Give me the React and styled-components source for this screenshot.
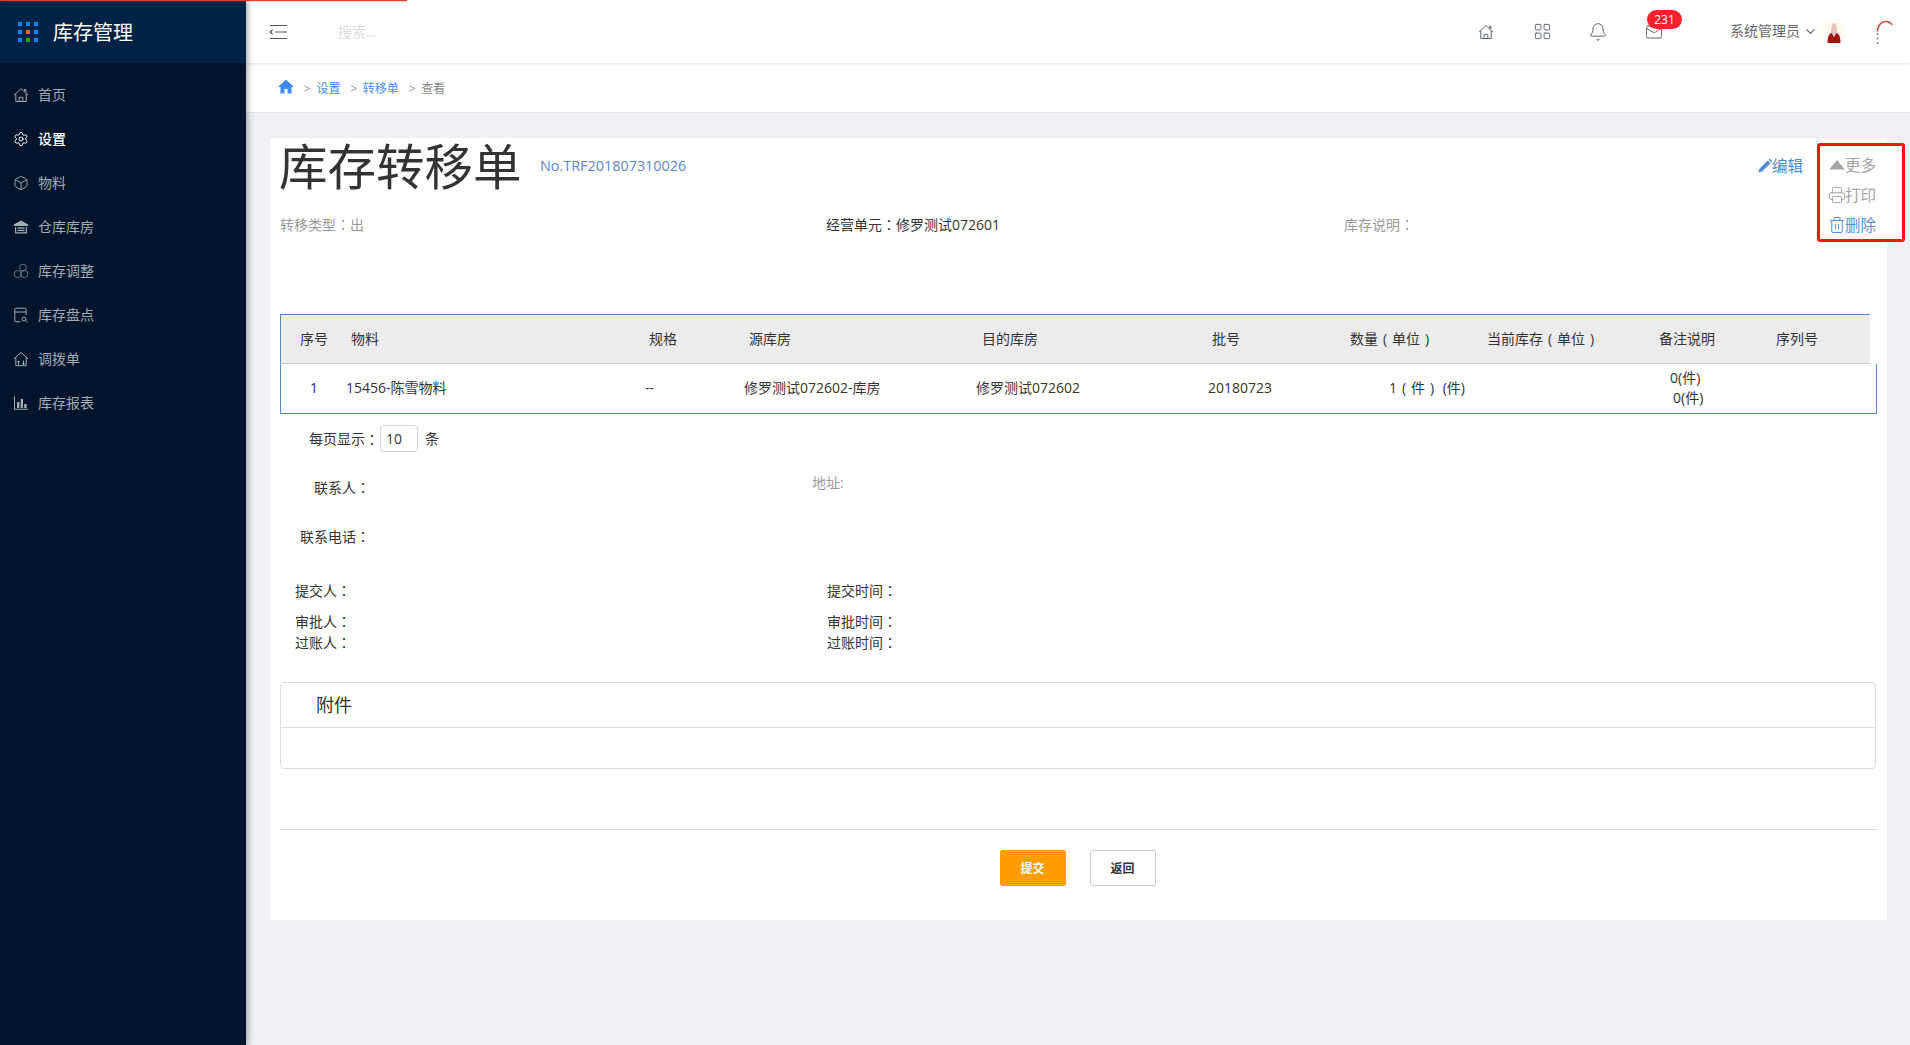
import React from "react";
import styled, { createGlobalStyle } from "styled-components";
import { Bell, Box, ChevronDown, LayoutGrid, Mail, Printer, Settings, Trash2 } from "lucide-react";

const GlobalStyle = createGlobalStyle`
  html, body {
    margin: 0;
    padding: 0;
    height: 100%;
    background: #eff1f5;
  }
  body {
    font-family: "Open Sans", "Noto Sans CJK SC", sans-serif;
    font-size: 14px;
    line-height: 20px;
    color: #333;
  }
  * {
    box-sizing: border-box;
  }
`;

const Shell = styled.div`
  position: relative;
  display: flex;
  height: 100vh;
  overflow: hidden;
`;

const LoadBar = styled.div`
  position: absolute;
  top: 0;
  left: 0;
  z-index: 5;
  width: 407px;
  height: 1px;
  background: #d9402e;
  box-shadow: 0 0 2px #d9402e;
`;

const Sidebar = styled.aside`
  flex: 0 0 246px;
  background: #00152b;
  box-shadow: 2px 0 6px rgba(0, 21, 41, 0.35);
  z-index: 2;
`;

const Brand = styled.div`
  display: flex;
  align-items: center;
  gap: 15px;
  height: 63px;
  padding-left: 18px;
  background: #002244;
  color: #fff;
  font-size: 20px;
`;

const BrandName = styled.span`
  padding-top: 2px;
`;

const DotGrid = styled.div`
  display: grid;
  grid-template-columns: repeat(3, 4px);
  gap: 4px;
`;

const Dot = styled.span`
  width: 4px;
  height: 4px;
  background: ${({ $color }) => $color};
`;

const Nav = styled.nav`
  padding-top: 10px;
`;

const NavItem = styled.div`
  display: flex;
  align-items: center;
  gap: 9px;
  height: 44px;
  padding-left: 13px;
  color: ${({ $active }) => ($active ? "#fff" : "#a3abb3")};
  font-weight: ${({ $active }) => ($active ? 500 : 400)};

  svg {
    flex: 0 0 16px;
    width: 16px;
    height: 16px;
  }
`;

const Main = styled.div`
  flex: 1;
  min-width: 0;
`;

const TopBar = styled.header`
  position: relative;
  z-index: 1;
  display: flex;
  align-items: center;
  height: 63px;
  padding: 0 17px 0 23px;
  background: #fff;
  box-shadow: 0 1px 3px rgba(0, 0, 0, 0.12);
`;

const MenuIcon = styled.svg`
  width: 18px;
  height: 16px;
`;

const Search = styled.span`
  margin-left: 51px;
  color: #dcdcdc;
`;

const TopIcons = styled.div`
  display: flex;
  margin-left: auto;
`;

const TopIcon = styled.div`
  position: relative;
  display: flex;
  align-items: center;
  justify-content: center;
  width: 56px;
  height: 30px;
  color: #5f6670;

  svg {
    width: ${({ $size }) => $size || 16}px;
    height: ${({ $size }) => $size || 16}px;
  }
`;

const Badge = styled.span`
  position: absolute;
  top: -7px;
  left: 21px;
  width: 35px;
  height: 19px;
  border-radius: 10px;
  background: #f5222d;
  color: #fff;
  font-size: 12px;
  line-height: 19px;
  text-align: center;
`;

const UserName = styled.span`
  margin-left: 48px;
  padding-bottom: 2px;
  color: #666;
`;

const Chevron = styled(ChevronDown)`
  width: 15px;
  height: 15px;
  margin: 0 4px 0 3px;
  color: #666;
`;

const Avatar = styled.svg`
  width: 24px;
  height: 24px;
`;

const Spinner = styled.svg`
  width: 17px;
  height: 24px;
  margin-left: 30px;
`;

const Crumbs = styled.div`
  display: flex;
  align-items: center;
  height: 50px;
  padding: 2px 0 0 32px;
  background: #fff;
  border-bottom: 1px solid #e6e6e6;
  font-size: 12px;
`;

const CrumbHome = styled.svg`
  width: 16px;
  height: 15px;
  margin-top: -5px;
`;

const CrumbSep = styled.span`
  margin: 0 5.5px 0 10px;
  color: #999;
`;

const CrumbLink = styled.span`
  color: ${({ $muted }) => ($muted ? "#888" : "#3f8cff")};
`;

const Content = styled.main`
  padding: 25px 23px 0 24px;
`;

const Card = styled.section`
  position: relative;
  height: 782px;
  padding: 0 10px;
  background: #fff;
`;

const TitleRow = styled.div`
  display: flex;
  align-items: center;
  height: 56px;
  padding-right: 74px;
`;

const Title = styled.h1`
  margin: 0 0 0 -1px;
  font-size: 48.5px;
  font-weight: 400;
  line-height: 56px;
`;

const OrderNo = styled.span`
  margin-left: 18.5px;
  color: #5b87d8;
  font-size: 14.4px;
`;

const EditLink = styled.span`
  display: flex;
  align-items: center;
  margin-left: auto;
  color: #4a8ad4;
  font-size: 15.5px;
`;

const InfoRow = styled.div`
  display: grid;
  grid-template-columns: 546px 518px 1fr;
  margin-top: 20px;
`;

const InfoItem = styled.span`
  color: ${({ $muted }) => ($muted ? "#999" : "#333")};
`;

const Wide = styled.span`
  font-family: "Noto Sans CJK TC", sans-serif;
`;

const Paren = styled.span`
  display: inline-block;
  width: 14px;
  text-align: center;
`;

const Table = styled.div`
  margin-top: 79px;
`;

const HeadRow = styled.div`
  display: grid;
  grid-template-columns: 51px 298px 100px 233px 230px 138px 137px 172px 117px 1fr;
  align-items: center;
  width: 1590px;
  height: 50px;
  padding-left: 19px;
  background: #ececec;
  border-top: 1px solid #5b87d0;
  border-left: 1px solid #5b87d0;
  border-bottom: 1px solid #ccc;
`;

const BodyRow = styled.div`
  display: grid;
  grid-template-columns: 65px 299px 99px 232px 232px 181px 281px 1fr;
  align-items: center;
  height: 50px;
  padding-bottom: 2px;
  border-left: 1px solid #5b87d0;
  border-right: 1px solid #5b87d0;
  border-bottom: 1px solid #5b87d0;
`;

const IndexCell = styled.span`
  padding-left: 29px;
`;

const NoteLine = styled.div`
  padding-left: ${({ $inset }) => ($inset ? "3px" : "0")};
`;

const Pager = styled.div`
  display: flex;
  align-items: center;
  margin-top: 11px;
  padding-left: 29px;
`;

const PageSize = styled.input`
  width: 38px;
  height: 27px;
  margin: 0 7px 0 1px;
  padding: 0 0 0 5px;
  border: 1px solid #d4d4d4;
  border-radius: 4px;
  color: #333;
  font: inherit;
  outline: none;
`;

const ContactGrid = styled.div`
  display: grid;
  grid-template-columns: 90px 442px 1fr;
  grid-template-rows: 25px 25px;
  row-gap: 24px;
  margin-top: 21px;
`;

const ContactLabel = styled.span`
  padding-top: 4px;
  text-align: right;
`;

const AddressLabel = styled.span`
  color: #999;
`;

const PeopleGrid = styled.div`
  display: grid;
  grid-template-columns: 532px 1fr;
  grid-template-rows: 31px 21px 20px;
  margin-top: 33px;
  padding-left: 15px;
`;

const AttachPanel = styled.div`
  height: 87px;
  margin: 30px 1px 0 0;
  border: 1px solid #ddd;
  border-radius: 4px;
`;

const AttachTitle = styled.div`
  display: flex;
  align-items: center;
  height: 45px;
  padding-left: 35px;
  border-bottom: 1px solid #ddd;
  font-size: 18px;
`;

const Divider = styled.hr`
  height: 1px;
  margin: 60px 0 0;
  border: 0;
  background: #ddd;
`;

const Actions = styled.div`
  display: flex;
  justify-content: center;
  gap: 24px;
  margin-top: 20px;
  padding-right: 2px;
`;

const ActionButton = styled.button`
  width: 66px;
  height: 36px;
  padding: 2px 0 0;
  border: 1px solid ${({ $primary }) => ($primary ? "#ff9c00" : "#ccc")};
  border-radius: 2px;
  background: ${({ $primary }) => ($primary ? "#ff9c00" : "#fff")};
  color: ${({ $primary }) => ($primary ? "#fff" : "#333")};
  font: inherit;
  font-size: 12px;
  font-weight: 700;
`;

const MoreMenu = styled.div`
  position: absolute;
  top: 5px;
  right: -18px;
  width: 88px;
  height: 99px;
  padding: 4px 0 0 9px;
  border: 3px solid #f5170f;
  border-radius: 3px;
  background: #fff;
  z-index: 3;
`;

const MoreItem = styled.div`
  display: flex;
  align-items: center;
  height: 30px;
  color: ${({ $blue }) => ($blue ? "#5b8fd4" : "#a6a6a6")};
  font-size: 15.5px;

  svg {
    flex: 0 0 18px;
    width: 18px;
    height: 18px;
    margin: 0 -1px;
  }
`;

const NAV_STROKE = {
  fill: "none",
  stroke: "currentColor",
  strokeWidth: 1,
  viewBox: "0 0 16 16",
};

const HomeOutline = () => (
  <svg {...NAV_STROKE}>
    <path d="M1 8.2 8 1.6l7 6.6M2.8 6.8v7.7h10.4V6.8M6.2 14.5v-4.2h3.6v4.2M11.6 4V2.4h1.4v3" />
  </svg>
);

const GearIcon = () => <Settings strokeWidth={1.5} />;

const BoxIcon = () => <Box strokeWidth={1.4} />;

const WarehouseIcon = () => (
  <svg viewBox="0 0 16 16" fill="currentColor">
    <path d="M8 1.5 15.2 5.6V7H.8V5.6Z" />
    <path d="M2 8h1.2v5.2h9.6V8H14v6.6H2Z" />
    <rect x="4.4" y="8.4" width="7.2" height="1.3" />
    <rect x="4.4" y="10.8" width="7.2" height="1.3" />
  </svg>
);

const CirclesIcon = () => (
  <svg {...NAV_STROKE} opacity="0.65">
    <circle cx="4.6" cy="11" r="3.5" />
    <circle cx="11.4" cy="11" r="3.5" />
    <circle cx="10" cy="4.6" r="3.4" />
  </svg>
);

const CountIcon = () => (
  <svg {...NAV_STROKE}>
    <path d="M7.5 14.8H3.2a1.4 1.4 0 0 1-1.4-1.4V2.6a1.4 1.4 0 0 1 1.4-1.4h8.6a1.4 1.4 0 0 1 1.4 1.4V8M2 5h11" />
    <circle cx="11" cy="12" r="2" />
    <path d="m12.5 13.5 2 1.6" />
  </svg>
);

const TransferIcon = () => (
  <svg {...NAV_STROKE}>
    <path d="M1 7.8 8 1.4l7 6.4M2.8 6.4v8.3h10.4V6.4M5.5 14v-4M4.2 11.2 5.5 9.8l1.3 1.4M10.5 9.5v4M9.2 12.4l1.3 1.4 1.3-1.4M8 6.2h.1" />
  </svg>
);

const BarsIcon = () => (
  <svg viewBox="0 0 16 16" fill="currentColor">
    <path d="M1 1.5h1v12.2h13v1H1Z" />
    <rect x="4" y="7" width="2.4" height="6" />
    <rect x="7.6" y="4" width="2.4" height="9" />
    <rect x="11.2" y="9" width="2.4" height="4" />
  </svg>
);

const PencilIcon = styled.svg`
  width: 15px;
  height: 15px;
`;

const NAV_ITEMS = [
  { label: "首页", Icon: HomeOutline },
  { label: "设置", Icon: GearIcon, active: true },
  { label: "物料", Icon: BoxIcon },
  { label: "仓库库房", Icon: WarehouseIcon },
  { label: "库存调整", Icon: CirclesIcon },
  { label: "库存盘点", Icon: CountIcon },
  { label: "调拨单", Icon: TransferIcon },
  { label: "库存报表", Icon: BarsIcon },
];

const LOGO_DOTS = [
  "#0a84ff", "#0a84ff", "#0a84ff",
  "#0a84ff", "#f26a0a", "#0a84ff",
  "#0a84ff", "#2ca02c", "#0a84ff",
];

const HEADERS = [
  "序号", "物料", "规格", "源库房", "目的库房", "批号",
  <>数量<Paren>(</Paren>单位<Paren>)</Paren></>,
  <>当前库存<Paren>(</Paren>单位<Paren>)</Paren></>,
  "备注说明", "序列号",
];

const Colon = () => <Wide>：</Wide>;

const App = () => {
  return (
    <Shell>
      <GlobalStyle />
      <LoadBar />
      <Sidebar>
        <Brand>
          <DotGrid>
            {LOGO_DOTS.map((color, i) => (
              <Dot key={i} $color={color} />
            ))}
          </DotGrid>
          <BrandName>库存管理</BrandName>
        </Brand>
        <Nav>
          {NAV_ITEMS.map(({ label, Icon, active }) => (
            <NavItem key={label} $active={active}>
              <Icon />
              {label}
            </NavItem>
          ))}
        </Nav>
      </Sidebar>
      <Main>
        <TopBar>
          <MenuIcon viewBox="0 0 18 16" fill="none" stroke="#555" strokeWidth="1.2">
            <path d="M1 1.5h17M6 8h12M1 14.5h17M3.6 5.8 1.2 8l2.4 2.2" />
          </MenuIcon>
          <Search>搜索...</Search>
          <TopIcons>
            <TopIcon><HomeOutline /></TopIcon>
            <TopIcon $size={19}><LayoutGrid strokeWidth={1.2} /></TopIcon>
            <TopIcon $size={20}><Bell strokeWidth={1.2} /></TopIcon>
            <TopIcon $size={18}>
              <Mail strokeWidth={1.3} />
              <Badge>231</Badge>
            </TopIcon>
          </TopIcons>
          <UserName>系统管理员</UserName>
          <Chevron />
          <Avatar viewBox="0 0 24 24">
            <circle cx="12" cy="12" r="12" fill="#fffbee" />
            <path d="M9 12c0-5 1-9 3-9s3 4 3 9l1 3H8Z" fill="#e3c4bc" />
            <path d="M5.5 23c0-5 1-9 4-10l2.5 4 2.5-4c3 1 4 5 4 10Z" fill="#a80f0f" />
          </Avatar>
          <Spinner viewBox="0 0 17 24" fill="none">
            <path d="M1.5 11.5C1.5 5 6 1.5 10 1.5c3 0 5 1.5 6 3.5" stroke="#d9483a" strokeWidth="1.6" />
            <circle cx="1.5" cy="14" r="1" fill="#777" />
            <circle cx="1.5" cy="18.5" r="1" fill="#777" />
            <circle cx="1.5" cy="23" r="1" fill="#777" />
          </Spinner>
        </TopBar>
        <Crumbs>
          <CrumbHome viewBox="0 0 16 15" fill="#3f8cff">
            <path d="M8 .5 16 8h-2.4v6.5H9.6V10H6.4v4.5H2.4V8H0Z" />
          </CrumbHome>
          <CrumbSep>&gt;</CrumbSep>
          <CrumbLink>设置</CrumbLink>
          <CrumbSep>&gt;</CrumbSep>
          <CrumbLink>转移单</CrumbLink>
          <CrumbSep>&gt;</CrumbSep>
          <CrumbLink $muted>查看</CrumbLink>
        </Crumbs>
        <Content>
          <Card>
            <TitleRow>
              <Title>库存转移单</Title>
              <OrderNo>No.TRF201807310026</OrderNo>
              <EditLink>
                <PencilIcon viewBox="0 0 15 15" fill="currentColor">
                  <path d="M10.8 1.6 13.4 4.2 5 12.6l-3.6 1 1-3.6ZM11.6.8l.6-.5a1 1 0 0 1 1.3 0l1.2 1.2a1 1 0 0 1 0 1.3l-.5.6Z" />
                </PencilIcon>
                编辑
              </EditLink>
            </TitleRow>
            <InfoRow>
              <InfoItem $muted>转移类型<Colon />出</InfoItem>
              <InfoItem>经营单元<Colon />修罗测试072601</InfoItem>
              <InfoItem $muted>库存说明<Colon /></InfoItem>
            </InfoRow>
            <Table>
              <HeadRow>
                {HEADERS.map((header, i) => (
                  <span key={i}>{header}</span>
                ))}
              </HeadRow>
              <BodyRow>
                <IndexCell>1</IndexCell>
                <span>15456-陈雪物料</span>
                <span>--</span>
                <span>修罗测试072602-库房</span>
                <span>修罗测试072602</span>
                <span>20180723</span>
                <span>1<Paren>(</Paren>件<Paren>)</Paren> (件)</span>
                <div>
                  <NoteLine>0(件)</NoteLine>
                  <NoteLine $inset>0(件)</NoteLine>
                </div>
              </BodyRow>
            </Table>
            <Pager>
              每页显示<Colon />
              <PageSize defaultValue="10" />
              条
            </Pager>
            <ContactGrid>
              <ContactLabel>联系人<Colon /></ContactLabel>
              <span />
              <AddressLabel>地址:</AddressLabel>
              <ContactLabel>联系电话<Colon /></ContactLabel>
            </ContactGrid>
            <PeopleGrid>
              <span>提交人<Colon /></span>
              <span>提交时间<Colon /></span>
              <span>审批人<Colon /></span>
              <span>审批时间<Colon /></span>
              <span>过账人<Colon /></span>
              <span>过账时间<Colon /></span>
            </PeopleGrid>
            <AttachPanel>
              <AttachTitle>附件</AttachTitle>
            </AttachPanel>
            <Divider />
            <Actions>
              <ActionButton $primary>提交</ActionButton>
              <ActionButton>返回</ActionButton>
            </Actions>
            <MoreMenu>
              <MoreItem>
                <svg viewBox="0 0 16 16" fill="currentColor">
                  <path d="M8 3.5 15 12H1Z" />
                </svg>
                更多
              </MoreItem>
              <MoreItem>
                <Printer strokeWidth={1.3} />
                打印
              </MoreItem>
              <MoreItem $blue>
                <Trash2 strokeWidth={1.4} />
                删除
              </MoreItem>
            </MoreMenu>
          </Card>
        </Content>
      </Main>
    </Shell>
  );
};

export default App;
